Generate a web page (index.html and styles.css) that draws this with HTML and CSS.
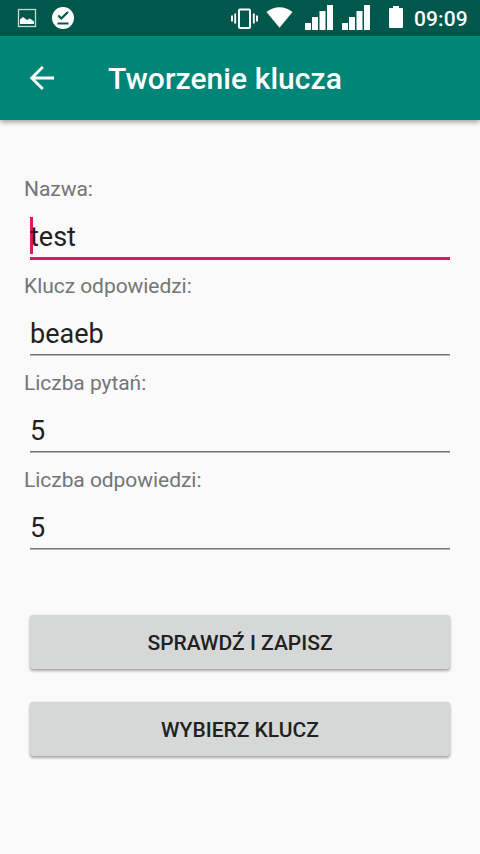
FILE: index.html
```html
<!DOCTYPE html>
<html lang="pl">
<head>
<meta charset="utf-8">
<title>Tworzenie klucza</title>
<link rel="stylesheet" href="styles.css">
</head>
<body>
<div class="status">
  <svg class="ic-picture" width="20" height="20" viewBox="0 0 20 20"><rect x="1.500" y="1.500" width="17" height="17" fill="none" stroke="#c8dad7" stroke-width="1.300"/><path d="M3 16v-4.500l3-2.500 4 3 3-1.500 4 3V16z" fill="#fff"/></svg>
  <svg class="ic-done" width="22" height="22" viewBox="0 0 22 22"><circle cx="11" cy="11" r="11" fill="#fff"/><path d="M6.300 8.500l3 3L16 5" fill="none" stroke="#00574b" stroke-width="2.200"/><path d="M5.500 16.500h11" stroke="#00574b" stroke-width="2"/></svg>
  <svg class="ic-vibrate" width="28" height="22" viewBox="0 0 28 22"><rect x="8" y="1.500" width="11" height="18.500" rx="1" fill="none" stroke="#fff" stroke-width="2"/><path d="M1 7.500v6M4.200 5.500v10M22.800 5.500v10M26 7.500v6" stroke="#fff" stroke-width="1.900"/></svg>
  <svg class="ic-wifi" width="28" height="22" viewBox="0 0 28 22"><path d="M.5 5C8-1.300 19-1.300 26.500 5L13.500 20.800z" fill="#fff"/></svg>
  <svg class="ic-signal" width="28" height="25" viewBox="0 0 28 25"><path d="M0 18h6v7H0zM7 12h6v13H7zM14.500 6h6v19h-6zM22 0h6v25h-6z" fill="#fff"/></svg>
  <svg class="ic-signal-b" width="28" height="25" viewBox="0 0 28 25"><path d="M0 18h6v7H0zM7 12h6v13H7zM14.500 6h6v19h-6zM22 0h6v25h-6z" fill="#fff"/></svg>
  <svg class="ic-battery" width="14" height="22" viewBox="0 0 14 22"><path d="M4 0h6v2h3q1 0 1 1v18q0 1-1 1H1q-1 0-1-1V3q0-1 1-1h3z" fill="#fff"/></svg>
  <span class="clock">09:09</span>
</div>
<header class="toolbar">
  <svg class="back" width="24" height="24" viewBox="0 0 24 24"><path d="M24 12H2M12.800 1L1.800 12l11 11" fill="none" stroke="#fff" stroke-width="2.800"/></svg>
  <h1 class="title">Tworzenie klucza</h1>
</header>
<main class="form">
  <div class="field active">
    <label class="label" for="name">Nazwa:</label>
    <div class="box"><span class="cursor"></span><input class="input" id="name" value="test"></div>
  </div>
  <div class="field">
    <label class="label" for="key">Klucz odpowiedzi:</label>
    <div class="box"><input class="input" id="key" value="beaeb"></div>
  </div>
  <div class="field">
    <label class="label" for="questions">Liczba pytań:</label>
    <div class="box"><input class="input" id="questions" value="5"></div>
  </div>
  <div class="field">
    <label class="label" for="answers">Liczba odpowiedzi:</label>
    <div class="box"><input class="input" id="answers" value="5"></div>
  </div>
  <div class="actions">
    <button class="button">SPRAWDŹ I ZAPISZ</button>
    <button class="button">WYBIERZ KLUCZ</button>
  </div>
</main>
</body>
</html>
```
FILE: styles.css
```css
* { box-sizing: border-box; }
body {
  margin: 0;
  height: 854px;
  overflow: hidden;
  background: #fafafa;
  font-family: Roboto, "Liberation Sans", sans-serif;
}
svg { display: block; flex: none; }
.status {
  display: flex;
  align-items: flex-start;
  height: 36px;
  background: #00574b;
}
.ic-picture { margin: 8px 0 0 17px; }
.ic-done { margin: 7px 0 0 15px; }
.ic-vibrate { margin: 8px 0 0 157px; }
.ic-wifi { margin: 7px 0 0 7px; }
.ic-signal { margin: 5px 0 0 11px; }
.ic-signal-b { margin: 5px 0 0 9px; }
.ic-battery { margin: 6px 0 0 19px; }
.clock {
  margin-left: 11px;
  color: #fff;
  font-size: 21px;
  font-weight: 500;
  letter-spacing: .1px;
  line-height: 38px;
}
.toolbar {
  display: flex;
  align-items: center;
  height: 84px;
  padding-left: 30px;
  background: #008577;
  box-shadow: 0 2px 5px rgba(0, 0, 0, .38);
}
.title {
  margin: 2px 0 0 54px;
  color: #fff;
  font-size: 30px;
  font-weight: 500;
  letter-spacing: .05px;
  line-height: 40px;
}
.form { padding: 55px 24px 0; }
.field { height: 97px; }
.label {
  display: block;
  color: #757575;
  font-size: 21px;
  letter-spacing: -.05px;
  line-height: 28px;
}
.box {
  position: relative;
  height: 56px;
  margin: 0 6px;
  padding-top: 16px;
  background: linear-gradient(#757575 50%, #b5b3b4 50%) bottom / 100% 2px no-repeat;
}
.active .box {
  height: 57px;
  background: none;
  border-bottom: 3px solid #d81b60;
}
.input {
  position: relative;
  display: block;
  width: 100%;
  height: 36px;
  padding: 0;
  border: 0;
  outline: 0;
  background: transparent;
  color: #212121;
  font: 27px/36px Roboto, "Liberation Sans", sans-serif;
}
.cursor {
  position: absolute;
  left: 0;
  top: 14px;
  width: 3px;
  height: 37px;
  background: #d81b60;
}
.actions {
  display: grid;
  gap: 33px;
  margin: 52px 6px 0;
}
.button {
  height: 54px;
  padding: 1px 0 0;
  border: 0;
  border-radius: 3px;
  background: #d6d8d7;
  box-shadow: 0 2px 3px rgba(0, 0, 0, .32), 0 0 2px rgba(0, 0, 0, .12);
  color: #212121;
  font: 500 21px/28px Roboto, "Liberation Sans", sans-serif;
}
```
